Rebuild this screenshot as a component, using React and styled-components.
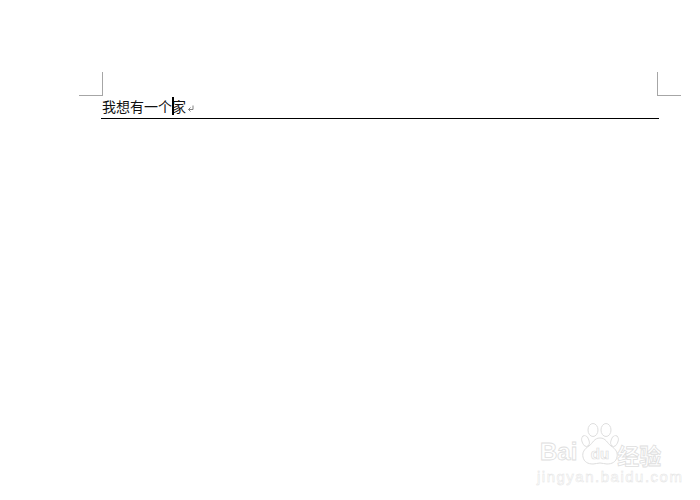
import React from "react";
import styled, { createGlobalStyle } from "styled-components";

const Global = createGlobalStyle`
  html, body { margin: 0; padding: 0; background: #fff; }
  body { font-family: "Noto Sans CJK SC", "Liberation Sans", sans-serif; }
`;

const Page = styled.div`
  position: relative;
  width: 700px;
  height: 500px;
  box-sizing: border-box;
  padding: 72px 19px 0 79px;
  overflow: hidden;
  background: #fff;
`;

const Marks = styled.div`
  display: flex;
  justify-content: space-between;
`;

const CropMark = styled.div`
  width: 24px;
  height: 24px;
  box-sizing: border-box;
  border-bottom: 1px solid #a6a6a6;
  border-${(p) => (p.$side === "left" ? "right" : "left")}: 1px solid #a6a6a6;
`;

const Header = styled.div`
  display: flex;
  align-items: center;
  width: 558px;
  height: 23px;
  margin-left: 22px;
  box-sizing: border-box;
  border-bottom: 1px solid #000;
  font-size: 14px;
  line-height: 22px;
  color: #111;
  white-space: nowrap;
`;

const Title = styled.span`
  position: relative;
  margin-left: 1px;
  margin-top: -2px;
`;

const Caret = styled.i`
  position: absolute;
  left: 70px;
  top: 2px;
  width: 2px;
  height: 18px;
  background: #000;
`;

const Return = styled.svg`
  flex: none;
  width: 7px;
  height: 7px;
  margin-left: 1px;
  margin-top: 2px;
`;

const Watermark = styled.div`
  position: absolute;
  left: 537px;
  top: 423px;
  width: 130px;
  height: 62px;
`;

const Brand = styled.div`
  display: flex;
  align-items: flex-end;
  height: 42px;
`;

const Outline = styled.span`
  font-family: "Liberation Sans", sans-serif;
  font-weight: 700;
  font-size: ${(p) => p.$size}px;
  line-height: 1;
  color: #fff;
  -webkit-text-stroke: 0.8px #dedede;
  letter-spacing: ${(p) => p.$spacing || 0}px;
`;

const Latin = styled(Outline)`
  margin-left: 3px;
  margin-bottom: 1px;
`;

const Cjk = styled(Outline)`
  font-family: "Noto Sans CJK SC", sans-serif;
  margin-left: -2px;
`;

const Paw = styled.svg`
  flex: none;
  width: 38px;
  height: 42px;
  margin-left: 4px;
`;

const Domain = styled(Outline)`
  display: block;
  margin-top: 4px;
  font-weight: 400;
  -webkit-text-stroke: 0.5px #e4e4e4;
`;

export default function App() {
  return (
    <Page>
      <Global />
      <Marks>
        <CropMark $side="left" />
        <CropMark $side="right" />
      </Marks>
      <Header>
        <Title>
          我想有一个家
          <Caret />
        </Title>
        <Return viewBox="0 0 7 7" fill="none" stroke="#808080" strokeWidth="1">
          <path d="M6 0.5V4.5H1.5M3.5 2.5L1.5 4.5L3.5 6.5" />
        </Return>
      </Header>
      <Watermark>
        <Brand>
          <Latin $size={24}>Bai</Latin>
          <Paw viewBox="0 0 38 42" fill="#fff" stroke="#dedede" strokeWidth="1">
            <ellipse cx="4.5" cy="18" rx="3.5" ry="5.5" transform="rotate(-20 4.5 18)" />
            <ellipse cx="12" cy="7" rx="5" ry="6.5" />
            <ellipse cx="25" cy="7" rx="5" ry="6.5" />
            <ellipse cx="33.5" cy="18" rx="3.5" ry="5.5" transform="rotate(20 33.5 18)" />
            <path d="M19 15c-6 0-7 5-11 8-5 3-7 7-6 11 1 5 5 7 10 7 2 0 5-1 7-1s5 1 7 1c5 0 9-2 10-7 1-4-1-8-6-11-4-3-5-8-11-8z" />
            <text x="19" y="36" fontSize="15" fontWeight="700" textAnchor="middle" fontFamily="Liberation Sans, sans-serif" strokeWidth="0.7">du</text>
          </Paw>
          <Cjk $size={22}>经验</Cjk>
        </Brand>
        <Domain $size={15} $spacing={1.5}>jingyan.baidu.com</Domain>
      </Watermark>
    </Page>
  );
}
